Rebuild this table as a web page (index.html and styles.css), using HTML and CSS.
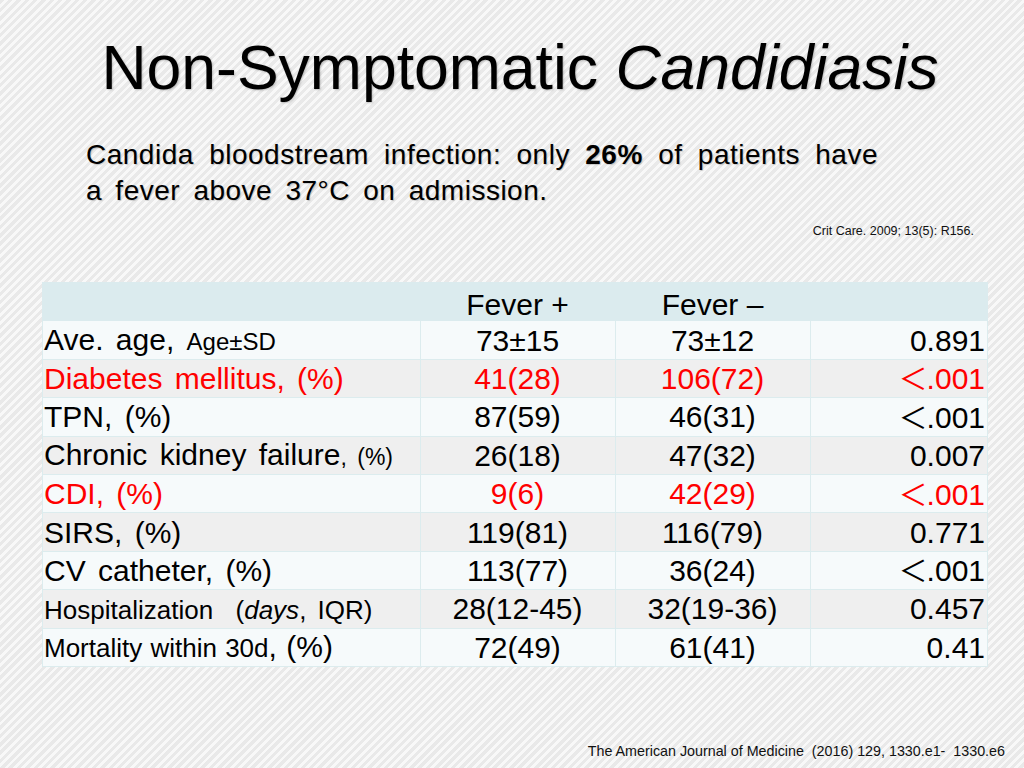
FILE: index.html
```html
<!DOCTYPE html>
<html>
<head>
<meta charset="utf-8">
<link rel="stylesheet" href="styles.css">
</head>
<body>
<div class="slide">
  <h1 class="title">Non-Symptomatic <em>Candidiasis</em></h1>
  <div class="lead">
    <div class="lead-line first">Candida bloodstream infection: only <b>26%</b> of patients have</div>
    <div class="lead-line">a fever above 37°C on admission.</div>
  </div>
  <div class="cite-top">Crit Care. 2009; 13(5): R156.</div>
  <table class="data">
    <colgroup>
      <col class="c-label"><col class="c-num"><col class="c-num"><col class="c-p">
    </colgroup>
    <thead>
      <tr class="head"><th></th><th>Fever +</th><th>Fever –</th><th></th></tr>
    </thead>
    <tbody>
      <tr class="light"><td class="lbl">Ave. age, <span class="sm">Age±SD</span></td><td>73±15</td><td>73±12</td><td class="p">0.891</td></tr>
      <tr class="grey red"><td class="lbl">Diabetes mellitus, (%)</td><td>41(28)</td><td>106(72)</td><td class="p"><span class="lt">＜</span>.001</td></tr>
      <tr class="light"><td class="lbl">TPN, (%)</td><td>87(59)</td><td>46(31)</td><td class="p"><span class="lt">＜</span>.001</td></tr>
      <tr class="grey"><td class="lbl">Chronic kidney failure<span class="xs">, (%)</span></td><td>26(18)</td><td>47(32)</td><td class="p">0.007</td></tr>
      <tr class="light red"><td class="lbl">CDI, (%)</td><td>9(6)</td><td>42(29)</td><td class="p"><span class="lt">＜</span>.001</td></tr>
      <tr class="grey"><td class="lbl">SIRS, (%)</td><td>119(81)</td><td>116(79)</td><td class="p">0.771</td></tr>
      <tr class="light"><td class="lbl">CV catheter, (%)</td><td>113(77)</td><td>36(24)</td><td class="p"><span class="lt">＜</span>.001</td></tr>
      <tr class="grey"><td class="lbl"><span class="md">Hospitalization &nbsp;(<i>days</i>, IQR)</span></td><td>28(12-45)</td><td>32(19-36)</td><td class="p">0.457</td></tr>
      <tr class="light"><td class="lbl tight"><span class="md">Mortality within 30d</span>, (%)</td><td>72(49)</td><td>61(41)</td><td class="p">0.41</td></tr>
    </tbody>
  </table>
  <div class="cite-bottom">The American Journal of Medicine &nbsp;(2016) 129, 1330.e1- &nbsp;1330.e6</div>
</div>
</body>
</html>
```

FILE: styles.css
```css
html, body {
  margin: 0;
  padding: 0;
}
body {
  font-family: "Liberation Sans", Arial, sans-serif;
  color: #000;
}
.slide {
  width: 1024px;
  height: 768px;
  box-sizing: border-box;
  padding-top: 31px;
  display: flex;
  flex-direction: column;
  background-color: #efefef;
  background-image: repeating-linear-gradient(135deg, #e9e9e9 0px, #e9e9e9 3.2px, #f8f8f8 3.2px, #f8f8f8 5.9px);
  overflow: hidden;
}
.title {
  margin: 0;
  padding-left: 16px;
  font-size: 62.5px;
  line-height: 72px;
  font-weight: normal;
  text-align: center;
  text-shadow: 1px 1px 2px rgba(0,0,0,0.22);
}
.title em {
  font-style: italic;
}
.lead {
  margin: 34px 0 0 86px;
  width: 792px;
  font-size: 28px;
  line-height: 36px;
  letter-spacing: 0.5px;
  word-spacing: 5px;
  text-shadow: 1px 1px 1px rgba(0,0,0,0.18);
}
.lead-line.first {
  text-align: justify;
  text-align-last: justify;
}
.lead b {
  font-weight: bold;
}
.cite-top {
  margin-top: 15px;
  align-self: flex-end;
  margin-right: 50px;
  font-size: 12.5px;
  line-height: 15px;
  color: #111;
}
.data {
  margin: 43px 0 0 42px;
  width: 945px;
  border-collapse: collapse;
  table-layout: fixed;
  font-size: 30px;
}
.c-label { width: 378px; }
.c-num { width: 195px; }
.c-p { width: 177px; }
.data th, .data td {
  height: 38.4px;
  padding: 1px 2px 0 1px;
  box-sizing: border-box;
  line-height: 32px;
  font-weight: normal;
  text-align: center;
  white-space: nowrap;
  border: 1px solid #dcecee;
}
.data th {
  vertical-align: bottom;
  line-height: 30px;
  border-color: #dbebee;
}
.head {
  background: #dbebee;
}
.light { background: #f6fafb; }
.grey { background: #efefef; }
.red { color: #ff0000; }
.data td.lbl {
  text-align: left;
  word-spacing: 4px;
}
.data td.lbl.tight {
  word-spacing: 1px;
}
.data td.p {
  text-align: right;
}
.lt {
  display: inline-block;
  line-height: 30px;
  vertical-align: -1px;
  margin-right: -1px;
  font-family: "Noto Sans CJK JP", "Liberation Sans", sans-serif;
  font-size: 29px;
}
.sm { font-size: 24px; word-spacing: 0; }
.xs { font-size: 23px; }
.md { font-size: 26px; }
.cite-bottom {
  margin-top: auto;
  margin-bottom: 8px;
  align-self: flex-end;
  margin-right: 19px;
  font-size: 14.3px;
  line-height: 18px;
  color: #111;
}
```
